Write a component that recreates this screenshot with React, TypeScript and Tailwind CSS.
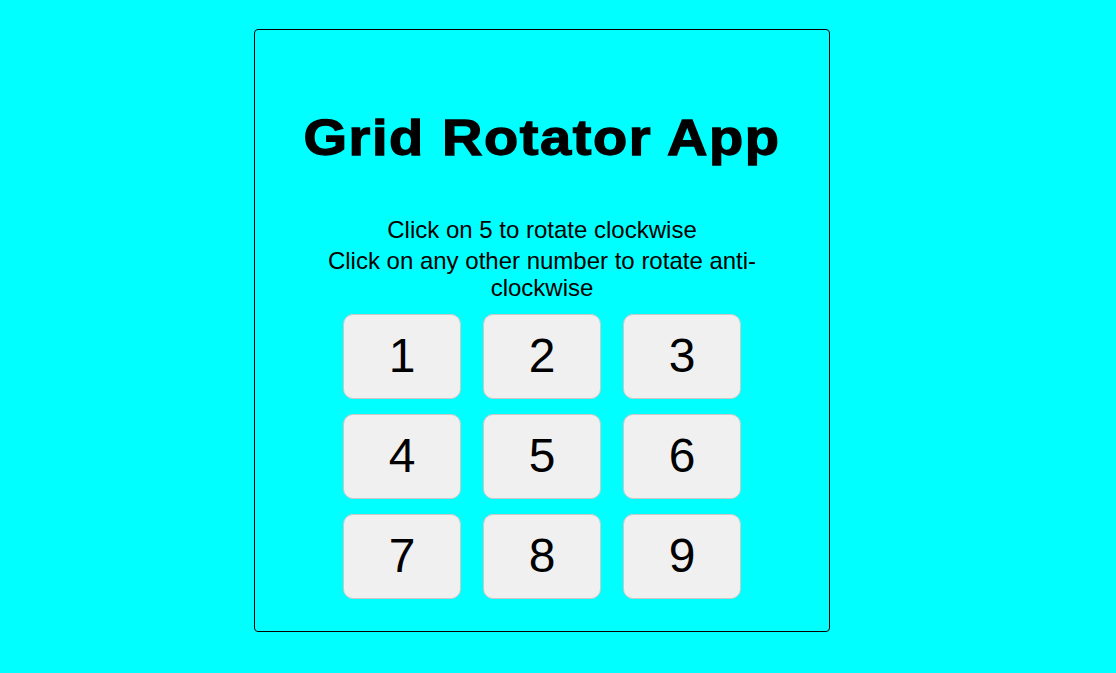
import { useState } from 'react'

export default function App() {
  const [cells, setCells] = useState([1, 2, 3, 4, 5, 6, 7, 8, 9])

  // ring of outer positions, clockwise
  const ring = [0, 1, 2, 5, 8, 7, 6, 3]

  const rotate = (clockwise: boolean) => {
    const next = [...cells]
    ring.forEach((pos, i) => {
      const from = clockwise ? ring[(i + ring.length - 1) % ring.length] : ring[(i + 1) % ring.length]
      next[pos] = cells[from]
    })
    setCells(next)
  }

  return (
    <div className="min-h-[673px] bg-[#00ffff] pl-[254px] pt-[29px] font-['Liberation_Sans',Arial,sans-serif] text-black">
      <div className="flex h-[603px] w-[576px] flex-col items-center rounded-[4px] border border-black pt-[80px]">
        <h1 className="scale-x-[1.12] text-[50px] font-bold leading-[56px] tracking-[1.4px] [-webkit-text-stroke:1.3px_black]">
          Grid Rotator App
        </h1>

        <div className="mt-[50px] w-[460px] text-center text-[24px] leading-[1.15]">
          <p>Click on 5 to rotate clockwise</p>
          <p className="mt-[3px]">Click on any other number to rotate anti-clockwise</p>
        </div>

        <div className="mt-[12px] grid grid-cols-[repeat(3,118px)] gap-x-[22px] gap-y-[15px]">
          {cells.map((n, i) => (
            <button
              key={i}
              onClick={() => rotate(n === 5)}
              className="flex h-[85px] items-center justify-center rounded-[10px] border border-[#c9c9c9] bg-[#f0f0f0] text-[48px] leading-none"
            >
              {n}
            </button>
          ))}
        </div>
      </div>
    </div>
  )
}
